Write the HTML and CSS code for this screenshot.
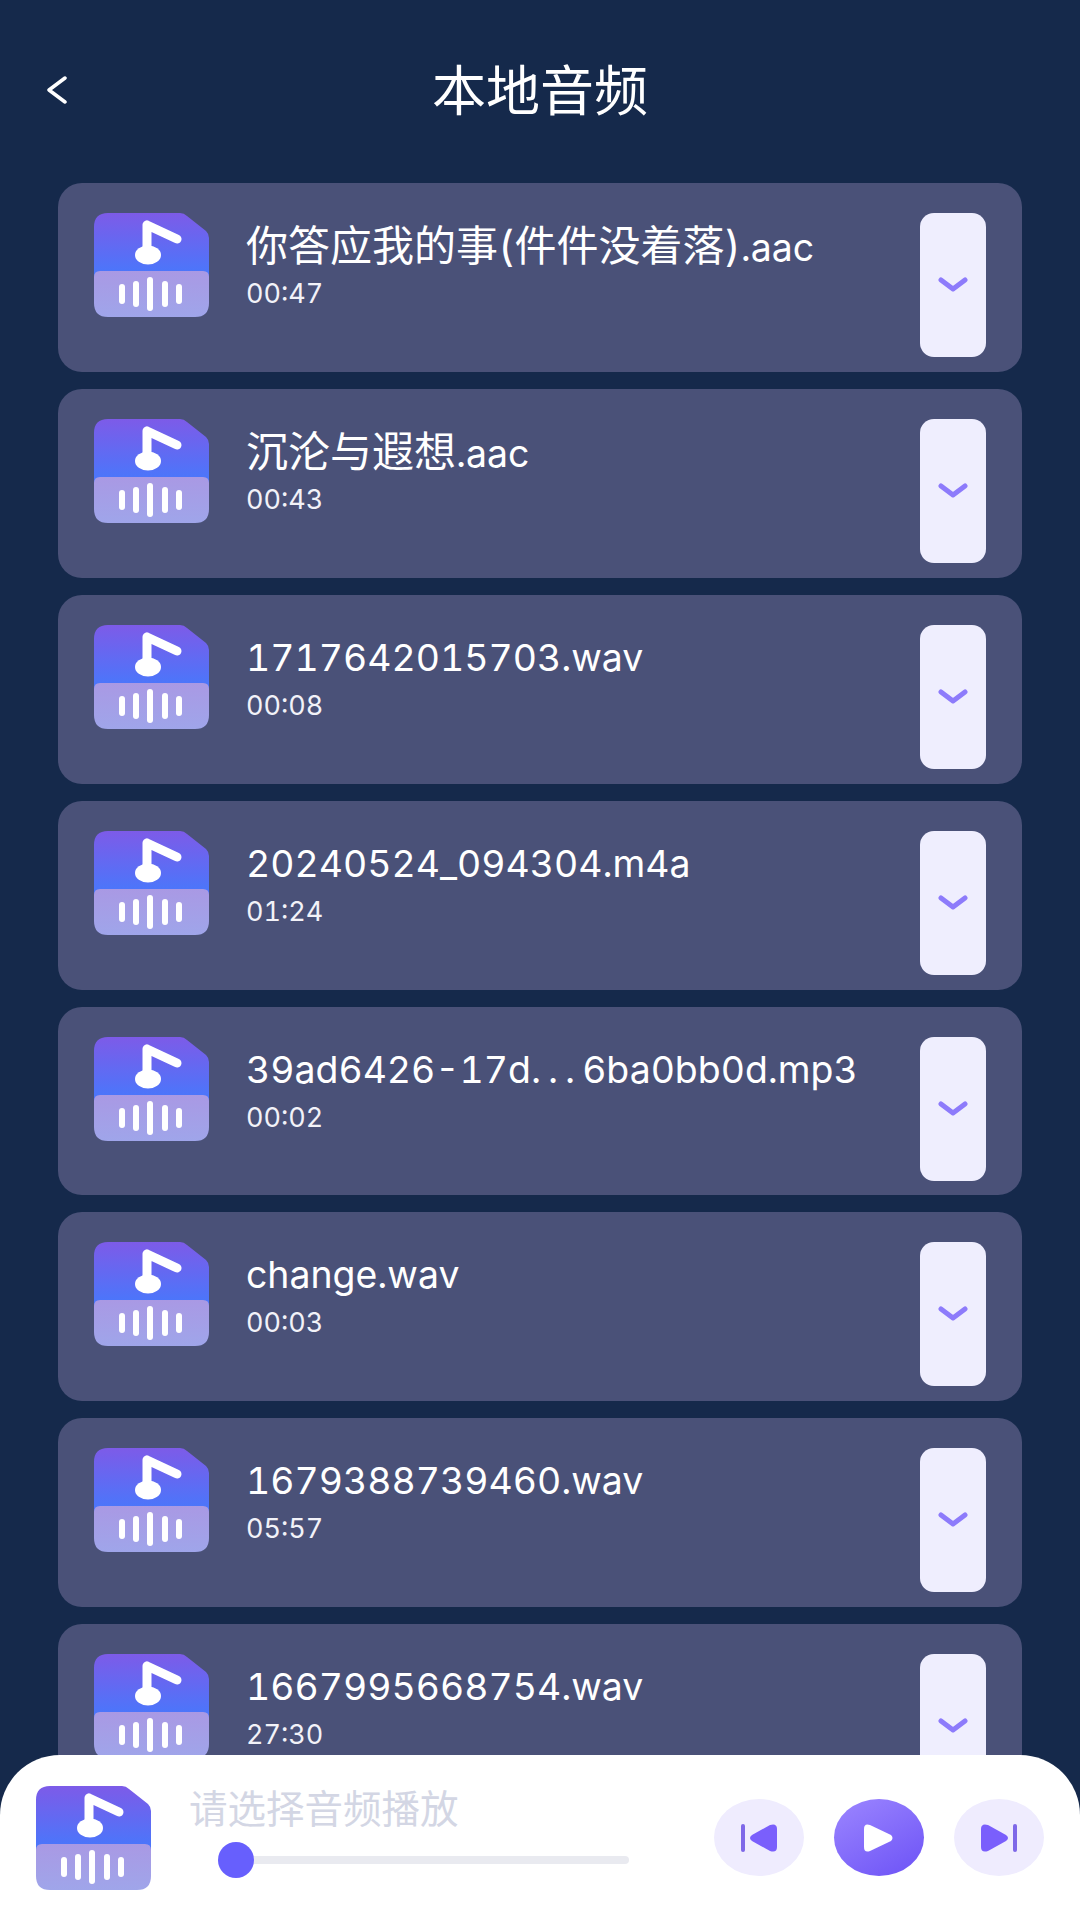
FILE: index.html
```html
<!DOCTYPE HTML>
<html>
<head>
<meta http-equiv="Content-Type" content="text/html; charset=utf-8">
<meta name="viewport" content="width=device-width,initial-scale=1.0,user-scalable=no">
<title>本地音频</title>
<link rel="stylesheet" href="styles.css">
</head>
<body>
	<svg class="sprite" width="0" height="0">
		<defs>
			<linearGradient id="fileTop" x1="0" y1="0" x2="0" y2="1">
				<stop offset="0" stop-color="#7d5be8"/>
				<stop offset="1" stop-color="#4778fc"/>
			</linearGradient>
			<linearGradient id="fileBottom" x1="0" y1="0" x2="0" y2="1">
				<stop offset="0" stop-color="#a999e4"/>
				<stop offset="1" stop-color="#9fa5ea"/>
			</linearGradient>
			<symbol id="file" viewBox="0 0 115 104">
				<path d="M14 0H86Q90 0 93 3L112 18Q115 21 115 25V64H0V14Q0 0 14 0Z" fill="url(#fileTop)"/>
				<path d="M6 58H109Q115 58 115 64V90Q115 104 101 104H14Q0 104 0 90V64Q0 58 6 58Z" fill="url(#fileBottom)"/>
				<path d="M53 12V40M53 12L83 26" fill="none" stroke="#fff" stroke-width="9" stroke-linecap="round" stroke-linejoin="round"/>
				<ellipse cx="54" cy="42" rx="13" ry="9.5" fill="#fff"/>
				<g stroke="#fff" stroke-width="6" stroke-linecap="round">
					<path d="M28 74V88"/>
					<path d="M42 71V91"/>
					<path d="M56 67V95"/>
					<path d="M71 71V91"/>
					<path d="M85 74V88"/>
				</g>
			</symbol>
		</defs>
	</svg>

	<header class="top">
		<svg class="back" width="20" height="28" viewBox="0 0 20 28"><path d="M18 2L2 14L18 26" fill="none" stroke="#fff" stroke-width="3.5" stroke-linecap="round" stroke-linejoin="round"/></svg>
		<h1>本地音频</h1>
	</header>

	<section class="list">
		<div class="row">
			<svg class="file"><use href="#file"/></svg>
			<div class="info"><p class="name"><span class="cn">你答应我的事(件件没着落)</span>.aac</p><p class="time">00:47</p></div>
			<div class="more"><svg width="30" height="16" viewBox="0 0 30 16"><path d="M3 3L15 12L27 3" fill="none" stroke="#8d7bfb" stroke-width="5" stroke-linecap="round" stroke-linejoin="round"/></svg></div>
		</div>
		<div class="row">
			<svg class="file"><use href="#file"/></svg>
			<div class="info"><p class="name"><span class="cn">沉沦与遐想</span>.aac</p><p class="time">00:43</p></div>
			<div class="more"><svg width="30" height="16" viewBox="0 0 30 16"><path d="M3 3L15 12L27 3" fill="none" stroke="#8d7bfb" stroke-width="5" stroke-linecap="round" stroke-linejoin="round"/></svg></div>
		</div>
		<div class="row">
			<svg class="file"><use href="#file"/></svg>
			<div class="info"><p class="name">1717642015703.wav</p><p class="time">00:08</p></div>
			<div class="more"><svg width="30" height="16" viewBox="0 0 30 16"><path d="M3 3L15 12L27 3" fill="none" stroke="#8d7bfb" stroke-width="5" stroke-linecap="round" stroke-linejoin="round"/></svg></div>
		</div>
		<div class="row">
			<svg class="file"><use href="#file"/></svg>
			<div class="info"><p class="name">20240524_094304.m4a</p><p class="time">01:24</p></div>
			<div class="more"><svg width="30" height="16" viewBox="0 0 30 16"><path d="M3 3L15 12L27 3" fill="none" stroke="#8d7bfb" stroke-width="5" stroke-linecap="round" stroke-linejoin="round"/></svg></div>
		</div>
		<div class="row">
			<svg class="file"><use href="#file"/></svg>
			<div class="info"><p class="name">39ad6426-17d<span class="dots">...</span>6ba0bb0d.mp3</p><p class="time">00:02</p></div>
			<div class="more"><svg width="30" height="16" viewBox="0 0 30 16"><path d="M3 3L15 12L27 3" fill="none" stroke="#8d7bfb" stroke-width="5" stroke-linecap="round" stroke-linejoin="round"/></svg></div>
		</div>
		<div class="row">
			<svg class="file"><use href="#file"/></svg>
			<div class="info"><p class="name">change.wav</p><p class="time">00:03</p></div>
			<div class="more"><svg width="30" height="16" viewBox="0 0 30 16"><path d="M3 3L15 12L27 3" fill="none" stroke="#8d7bfb" stroke-width="5" stroke-linecap="round" stroke-linejoin="round"/></svg></div>
		</div>
		<div class="row">
			<svg class="file"><use href="#file"/></svg>
			<div class="info"><p class="name">1679388739460.wav</p><p class="time">05:57</p></div>
			<div class="more"><svg width="30" height="16" viewBox="0 0 30 16"><path d="M3 3L15 12L27 3" fill="none" stroke="#8d7bfb" stroke-width="5" stroke-linecap="round" stroke-linejoin="round"/></svg></div>
		</div>
		<div class="row">
			<svg class="file"><use href="#file"/></svg>
			<div class="info"><p class="name">1667995668754.wav</p><p class="time">27:30</p></div>
			<div class="more"><svg width="30" height="16" viewBox="0 0 30 16"><path d="M3 3L15 12L27 3" fill="none" stroke="#8d7bfb" stroke-width="5" stroke-linecap="round" stroke-linejoin="round"/></svg></div>
		</div>
	</section>

	<footer class="player">
		<svg class="file"><use href="#file"/></svg>
		<div class="now">
			<p class="hint">请选择音频播放</p>
			<div class="track"><span class="thumb"></span></div>
		</div>
		<div class="ctrl">
			<div class="btn"><svg width="36" height="28" viewBox="0 0 36 28"><rect x="0" y="0" width="4" height="28" rx="2" fill="#7e68e8"/><path d="M11 11L29 1Q36 -1 36 5V23Q36 29 29 27L11 17Q7 14 11 11Z" fill="#7a5ffc"/></svg></div>
			<div class="btn play"><svg width="30" height="28" viewBox="0 0 30 28"><path d="M0 5Q0 -1 6 1L27 11Q30 14 27 17L6 27Q0 29 0 23Z" fill="#fff"/></svg></div>
			<div class="btn"><svg width="36" height="28" viewBox="0 0 36 28"><rect x="32" y="0" width="4" height="28" rx="2" fill="#7e68e8"/><path d="M25 11L7 1Q0 -1 0 5V23Q0 29 7 27L25 17Q29 14 25 11Z" fill="#7a5ffc"/></svg></div>
		</div>
	</footer>
</body>
</html>
```

FILE: styles.css
```css
html, body { margin: 0; padding: 0; }
body { width: 1080px; height: 1920px; overflow: hidden; position: relative; background: #15294b; font-family: "Inter", "Noto Sans CJK SC", sans-serif; font-variant-numeric: tabular-nums; }
p, h1 { margin: 0; font-weight: normal; }
.sprite { display: block; }

.top { height: 183px; display: grid; grid-template-columns: 1fr auto 1fr; align-items: center; padding: 0 47px; box-sizing: border-box; }
.top h1 { color: #fff; font-size: 54px; line-height: 60px; grid-column: 2; grid-row: 1; }
.back { grid-column: 1; grid-row: 1; margin-bottom: 4px; }

.list { display: flex; flex-direction: column; gap: 17px; padding: 0 58px; }
.row { height: 188.9px; flex: none; box-sizing: border-box; padding: 30px 36px; display: flex; background: #4a5178; border-radius: 24px; }
.file { width: 115px; height: 104px; flex: none; }
.info { flex: 1; margin-left: 37px; color: #fff; }
.name { font-size: 37.4px; line-height: 50px; height: 50px; margin-top: 8px; white-space: nowrap; }
.cn { font-size: 42px; }
.dots { letter-spacing: 7px; }
.time { font-size: 27px; line-height: 36px; margin-top: 5px; color: #f2f2f8; }
.more { width: 66px; height: 144px; flex: none; display: flex; align-items: center; justify-content: center; background: #efeefe; border-radius: 14px; }

.player { position: absolute; left: 0; right: 0; bottom: 0; height: 165px; display: flex; align-items: center; padding: 0 36px; box-sizing: border-box; background: #fff; border-radius: 60px 60px 0 0; }
.now { margin-left: 38px; width: 440px; }
.hint { font-size: 38.5px; line-height: 48px; color: #d3d6e4; }
.track { position: relative; height: 8px; margin: 23px 0 26px 29px; background: #e9eaf0; border-radius: 4px; }
.thumb { position: absolute; left: 0; top: -14px; width: 36px; height: 36px; background: #675ffd; border-radius: 50%; }
.ctrl { margin-left: auto; display: flex; gap: 30px; }
.btn { width: 90px; height: 77px; display: flex; align-items: center; justify-content: center; background: #efecfe; border-radius: 50%; }
.play { background: linear-gradient(150deg, #9c86ff, #6c52f6); }
```
